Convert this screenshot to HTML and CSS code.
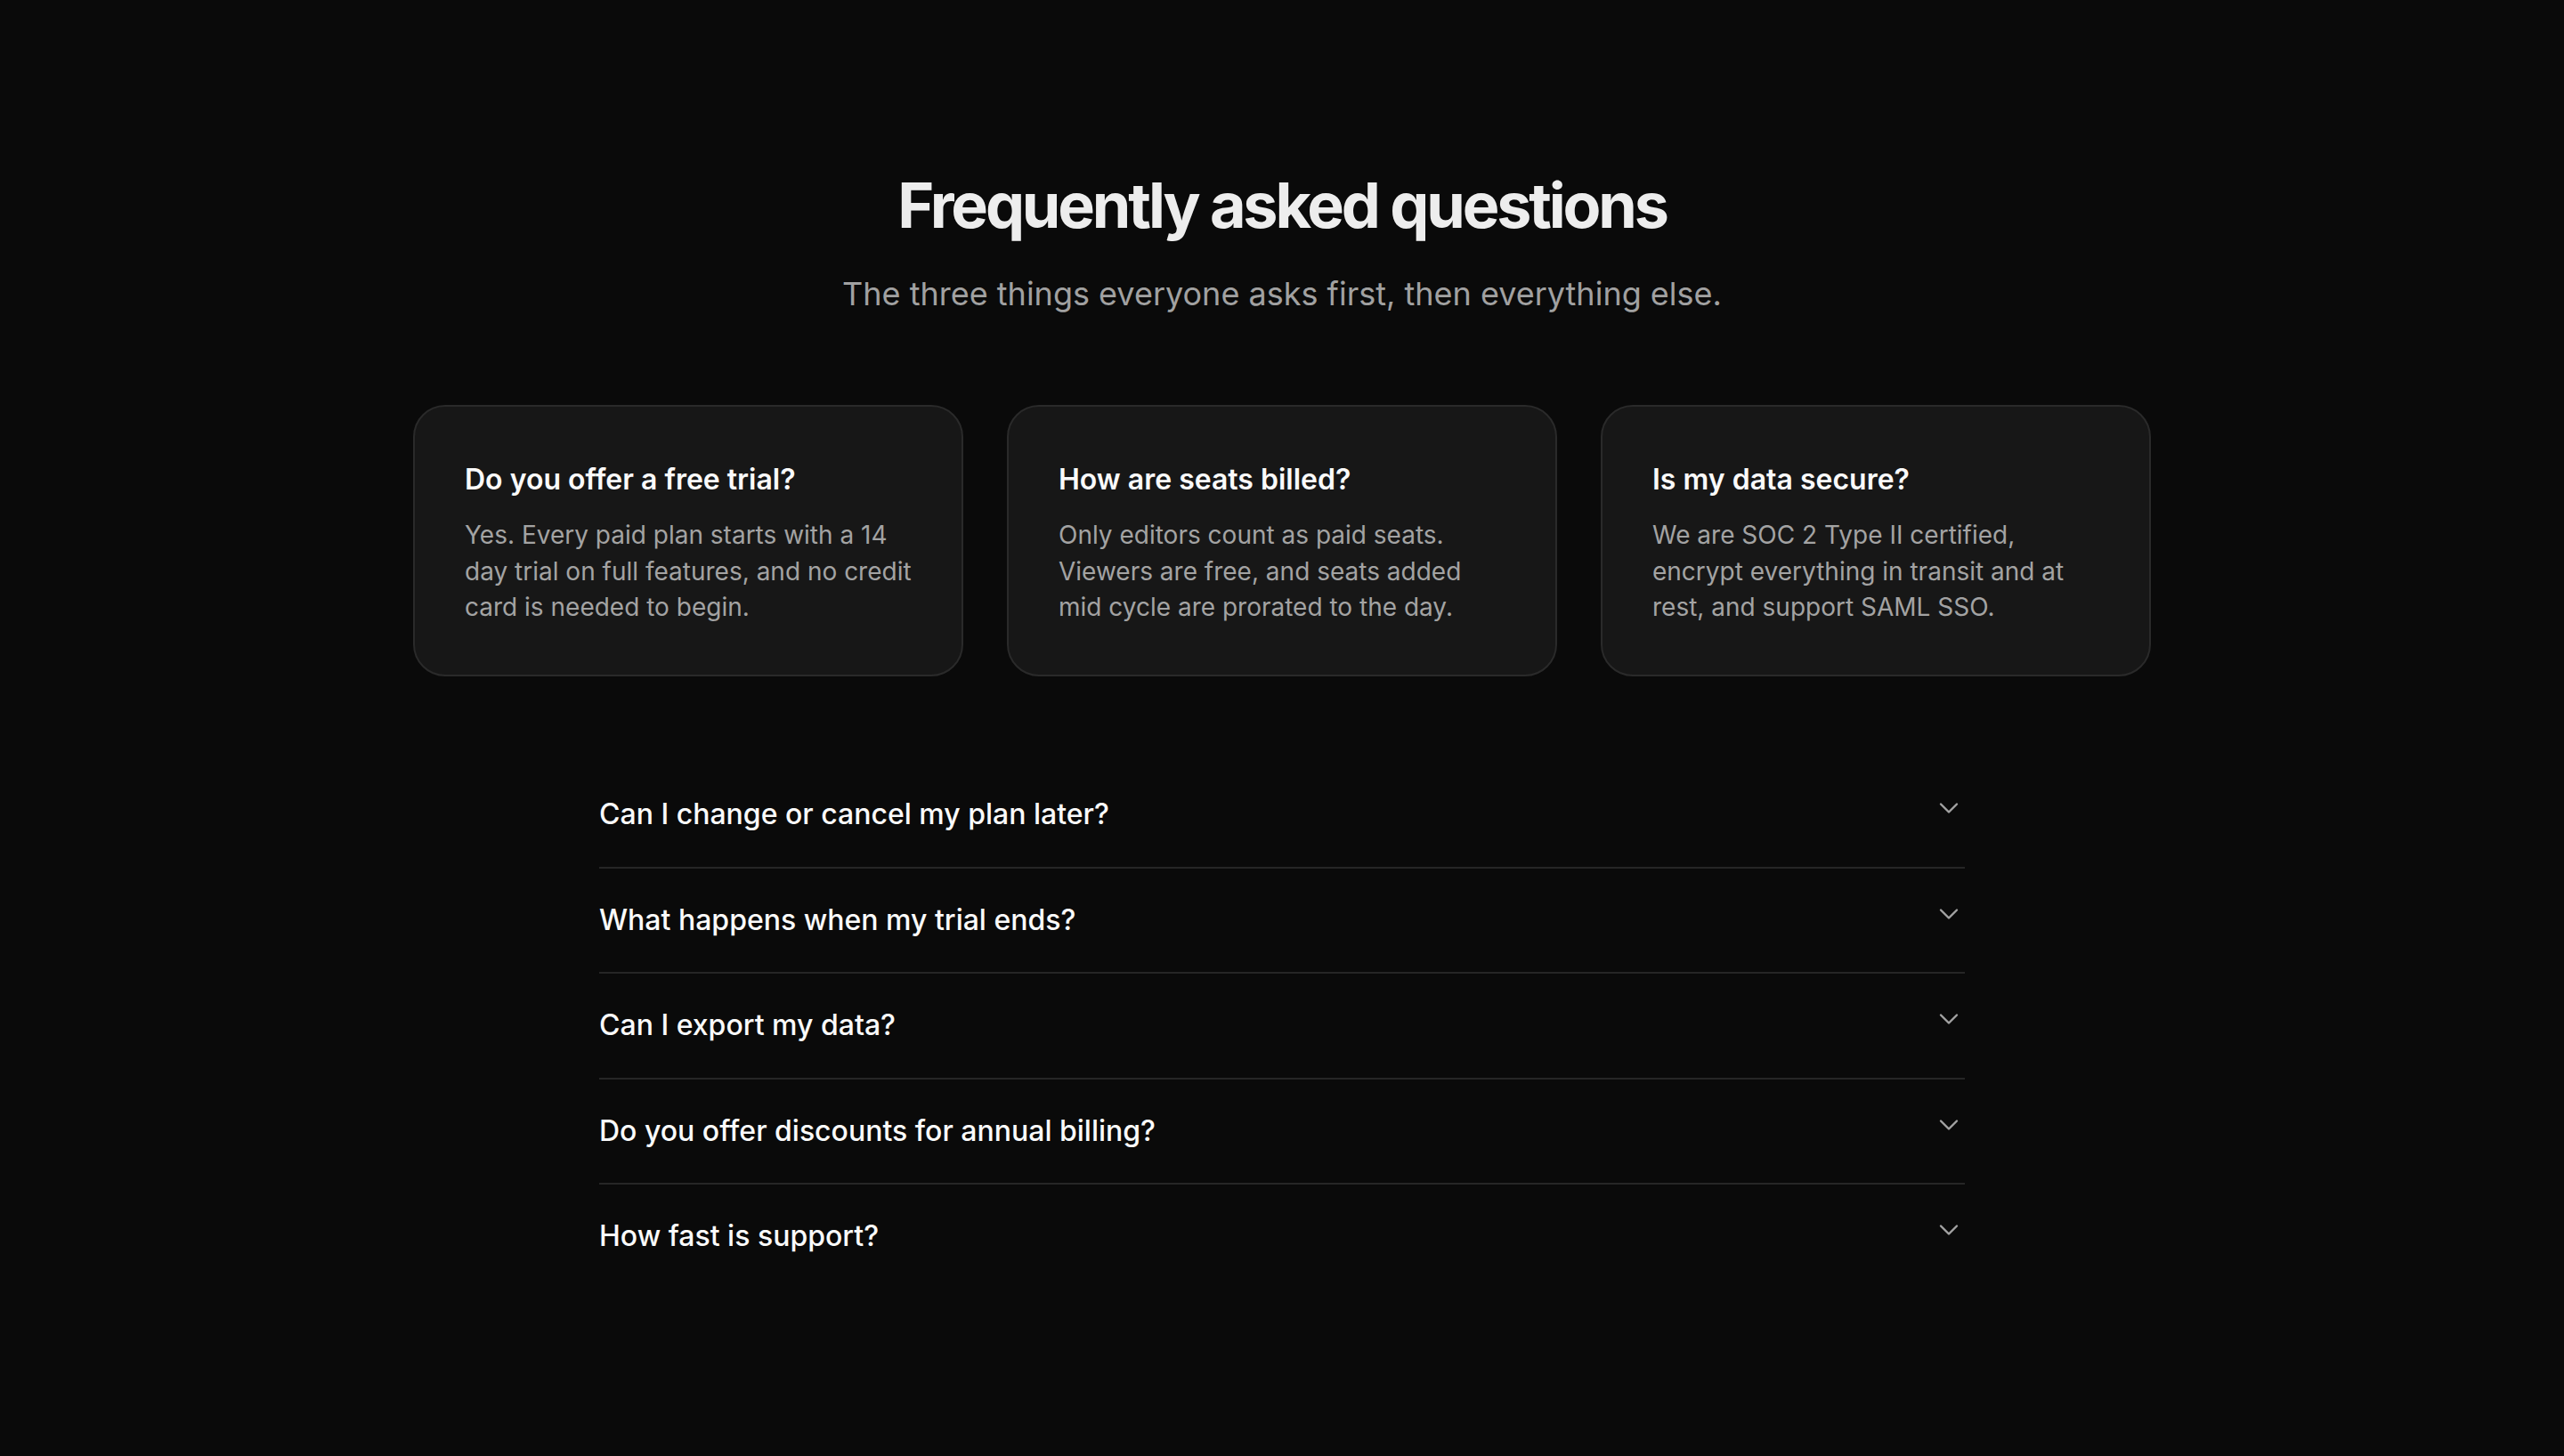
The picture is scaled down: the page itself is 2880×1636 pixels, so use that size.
FILE: index.html
```html
<!DOCTYPE html>
<html lang="en">
<head>
<meta charset="utf-8">
<title>FAQ</title>
<link rel="stylesheet" href="styles.css">
</head>
<body>
<main class="faq">
  <header class="faq-head">
    <h1 class="faq-title">Frequently asked questions</h1>
    <p class="faq-sub">The three things everyone asks first, then everything else.</p>
  </header>

  <section class="cards">
    <article class="card">
      <h2 class="card-q">Do you offer a free trial?</h2>
      <p class="card-a">Yes. Every paid plan starts with a 14 day trial on full features, and no credit card is needed to begin.</p>
    </article>
    <article class="card">
      <h2 class="card-q">How are seats billed?</h2>
      <p class="card-a">Only editors count as paid seats. Viewers are free, and seats added mid cycle are prorated to the day.</p>
    </article>
    <article class="card">
      <h2 class="card-q">Is my data secure?</h2>
      <p class="card-a">We are SOC 2 Type II certified, encrypt everything in transit and at rest, and support SAML SSO.</p>
    </article>
  </section>

  <section class="list">
    <div class="item">
      <span class="item-q">Can I change or cancel my plan later?</span>
      <svg class="chev" viewBox="0 0 24 24" fill="none" stroke="currentColor" stroke-width="1.6" stroke-linecap="round" stroke-linejoin="round"><path d="m6 9 6 6 6-6"/></svg>
    </div>
    <div class="item">
      <span class="item-q">What happens when my trial ends?</span>
      <svg class="chev" viewBox="0 0 24 24" fill="none" stroke="currentColor" stroke-width="1.6" stroke-linecap="round" stroke-linejoin="round"><path d="m6 9 6 6 6-6"/></svg>
    </div>
    <div class="item">
      <span class="item-q">Can I export my data?</span>
      <svg class="chev" viewBox="0 0 24 24" fill="none" stroke="currentColor" stroke-width="1.6" stroke-linecap="round" stroke-linejoin="round"><path d="m6 9 6 6 6-6"/></svg>
    </div>
    <div class="item">
      <span class="item-q">Do you offer discounts for annual billing?</span>
      <svg class="chev" viewBox="0 0 24 24" fill="none" stroke="currentColor" stroke-width="1.6" stroke-linecap="round" stroke-linejoin="round"><path d="m6 9 6 6 6-6"/></svg>
    </div>
    <div class="item">
      <span class="item-q">How fast is support?</span>
      <svg class="chev" viewBox="0 0 24 24" fill="none" stroke="currentColor" stroke-width="1.6" stroke-linecap="round" stroke-linejoin="round"><path d="m6 9 6 6 6-6"/></svg>
    </div>
  </section>
</main>
</body>
</html>
```

FILE: styles.css
```css
html, body {
  margin: 0;
  padding: 0;
  background: #0a0a0a;
}

body {
  font-family: Inter, "Noto Sans", sans-serif;
  color: #fafafa;
  min-height: 1636px;
}

.faq {
  display: flex;
  flex-direction: column;
  align-items: center;
  padding-top: 185px;
}

.faq-head {
  display: flex;
  flex-direction: column;
  align-items: center;
}

.faq-title {
  margin: 0;
  font-size: 70px;
  line-height: 92px;
  font-weight: 700;
  letter-spacing: -0.045em;
  color: #ededed;
}

.faq-sub {
  margin: 27px 0 0;
  font-size: 36px;
  line-height: 52px;
  font-weight: 400;
  color: #a1a1a1;
}

.cards {
  margin-top: 99px;
  display: grid;
  grid-template-columns: repeat(3, 618px);
  gap: 49px;
}

.card {
  box-sizing: border-box;
  height: 305px;
  padding: 60px 56px 56px;
  background: #171717;
  border: 2px solid #2a2a2a;
  border-radius: 36px;
}

.card-q {
  margin: 0;
  font-size: 32px;
  line-height: 44px;
  font-weight: 600;
  color: #fafafa;
}

.card-a {
  margin: 20px 0 0;
  font-size: 28px;
  line-height: 40.5px;
  font-weight: 400;
  color: #a3a3a3;
}

.list {
  margin-top: 97px;
  width: 1534px;
  display: flex;
  flex-direction: column;
}

.item {
  display: flex;
  align-items: flex-start;
  justify-content: space-between;
  padding: 35px 0 35.5px;
  border-bottom: 2px solid #262626;
}

.item:last-child {
  border-bottom: none;
}

.item-q {
  font-size: 32px;
  line-height: 46px;
  font-weight: 500;
  color: #fafafa;
}

.chev {
  width: 36px;
  height: 36px;
  margin-top: -2px;
  color: #a3a3a3;
  flex: none;
}
```
